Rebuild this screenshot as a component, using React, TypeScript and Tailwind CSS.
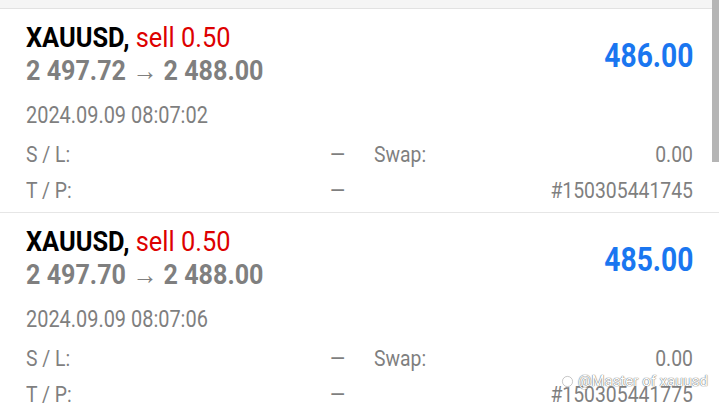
import React from "react";

type Deal = {
  price: string;
  profit: string;
  time: string;
  ticket: string;
};

const deals: Deal[] = [
  { price: "2 497.72 → 2 488.00", profit: "486.00", time: "2024.09.09 08:07:02", ticket: "#150305441745" },
  { price: "2 497.70 → 2 488.00", profit: "485.00", time: "2024.09.09 08:07:06", ticket: "#150305441775" },
];

function Item({ d }: { d: Deal }) {
  return (
    <div className="relative h-[204px] border-b border-[#e6e6e6] px-[26px] pt-[15px]">
      <div className="h-[28px] text-[28px] leading-[28px] whitespace-nowrap">
        <span className="inline-block origin-left scale-x-[0.907]">
          <span className="font-bold text-black">XAUUSD,</span>{" "}
          <span className="text-[#dd0000]">sell 0.50</span>
        </span>
      </div>
      <div className="mt-[6px] h-[27px] text-[27px] leading-[27px] font-bold text-[#7f7f7f] whitespace-nowrap">
        <span className="inline-block origin-left scale-x-[0.93]">{d.price}</span>
      </div>
      <div className="absolute right-[26px] top-[29px] h-[34px] text-[34px] leading-[34px] font-bold text-[#1a76f0] whitespace-nowrap">
        <span className="inline-block origin-right scale-x-[0.83]">{d.profit}</span>
      </div>
      <div className="mt-[18px] h-[24px] text-[24px] leading-[24px] text-[#7f7f7f] whitespace-nowrap">
        <span className="inline-block origin-left scale-x-[0.83]">{d.time}</span>
      </div>
      <div className="mt-[17px] grid grid-cols-2 gap-x-[28px] gap-y-[14px] text-[22px] leading-[22px] text-[#7f7f7f] whitespace-nowrap">
        <div className="flex justify-between">
          <span className="inline-block origin-left scale-x-[0.88]">S / L:</span>
          <span className="inline-block origin-right scale-x-[0.88]">—</span>
        </div>
        <div className="flex justify-between">
          <span className="inline-block origin-left scale-x-[0.88]">Swap:</span>
          <span className="inline-block origin-right scale-x-[0.88]">0.00</span>
        </div>
        <div className="flex justify-between">
          <span className="inline-block origin-left scale-x-[0.88]">T / P:</span>
          <span className="inline-block origin-right scale-x-[0.88]">—</span>
        </div>
        <div className="flex justify-end">
          <span className="inline-block origin-right scale-x-[0.88]">{d.ticket}</span>
        </div>
      </div>
    </div>
  );
}

export default function App() {
  return (
    <div className="relative w-[719px] h-[411px] overflow-hidden bg-white font-['Roboto',sans-serif]">
      <div className="h-[9px] bg-[#f5f5f5] border-b border-[#e2e2e2]" />
      {deals.map((d) => (
        <Item key={d.ticket} d={d} />
      ))}
      <div className="absolute right-0 top-0 w-[7px] h-[162px] bg-[#b5b5b5]" />
      <div className="absolute left-[561px] top-[373px] flex items-center gap-[3px] text-[15px] leading-[17px] text-white whitespace-nowrap [text-shadow:0_0_1px_#666,0_0_1px_#666]">
        <svg width="13" height="13" viewBox="0 0 14 14" className="mr-[1px]">
          <circle cx="7" cy="7" r="5.5" fill="none" stroke="#fff" strokeWidth="1.6" />
          <circle cx="7" cy="7" r="5.5" fill="none" stroke="#888" strokeWidth="0.5" />
        </svg>
        <span>@Master of xauusd</span>
      </div>
    </div>
  );
}
